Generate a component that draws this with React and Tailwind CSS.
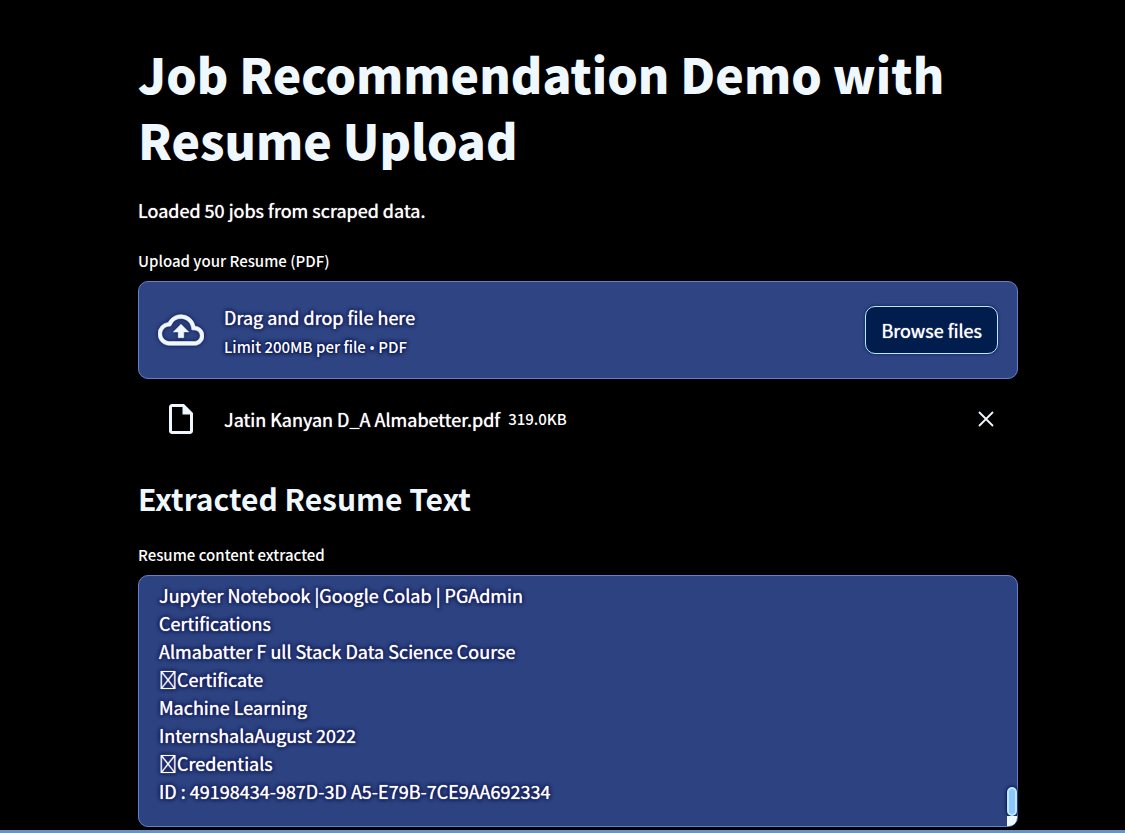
import { useEffect, useRef } from "react";

const resumeText = [
  "Jupyter Notebook |Google Colab | PGAdmin",
  "Certifications",
  "Almabatter F ull Stack Data Science Course",
  "\uf0b7Certificate",
  "Machine Learning",
  "InternshalaAugust 2022",
  "\uf0b7Credentials",
  "ID : 49198434-987D-3D A5-E79B-7CE9AA692334",
].join("\n");

function CloudUploadIcon() {
  return (
    <svg viewBox="0 0 24 24" className="h-[46px] w-[46px] shrink-0 fill-[#f0f8ff] stroke-[#f0f8ff] stroke-[0.3] drop-shadow-[0_0_2px_#0a1450]" aria-hidden="true">
      <path d="M19.35 10.04A7.49 7.49 0 0 0 12 4C9.11 4 6.6 5.64 5.35 8.04A5.994 5.994 0 0 0 0 14c0 3.31 2.69 6 6 6h13c2.76 0 5-2.24 5-5 0-2.64-2.05-4.78-4.65-4.96zM19 18H6c-2.21 0-4-1.79-4-4 0-2.05 1.53-3.76 3.56-3.97l1.07-.11.5-.95A5.469 5.469 0 0 1 12 6c2.62 0 4.88 1.86 5.39 4.43l.3 1.5 1.53.11A2.98 2.98 0 0 1 22 15c0 1.65-1.35 3-3 3zM8 13h2.55v3h2.9v-3H16l-4-4-4 4z" />
    </svg>
  );
}

function FileIcon() {
  return (
    <svg viewBox="0 0 24 24" className="h-9 w-9 shrink-0 fill-[#f0f8ff]" aria-hidden="true">
      <path d="M6 2c-1.1 0-1.99.9-1.99 2L4 20c0 1.1.89 2 1.99 2H18c1.1 0 2-.9 2-2V8l-6-6H6zm0 18V4h7v5h5v11H6z" />
    </svg>
  );
}

function Uploader() {
  return (
    <section>
      <label htmlFor="resume-file" className="block text-[15px] leading-6 font-medium">
        Upload your Resume (PDF)
      </label>
      <div className="mt-2 flex items-center rounded-[10px] border border-[#6480cc] bg-[#2f4482] px-[19px] py-4">
        <input id="resume-file" type="file" accept="application/pdf" className="sr-only" />
        <CloudUploadIcon />
        <div className="ml-5 flex-1 pt-1">
          <div className="text-[18px] leading-[30px] [text-shadow:0_0_1px_#fff,0_0_3px_#0a1450,0_0_4px_#0a1450,0_0_4px_#0a1450]">
            Drag and drop file here
          </div>
          <div className="text-[15px] leading-[30px] font-medium [text-shadow:0_0_3px_#0a1450,0_0_4px_#0a1450,0_0_4px_#0a1450]">
            Limit 200MB per file <span className="font-['Noto_Sans',sans-serif]">•</span> PDF
          </div>
        </div>
        <button
          type="button"
          className="h-12 rounded-[10px] border border-[#b5ecff] bg-[#011d4e] px-[15px] text-[18px] leading-7 shadow-[0_0_3px_#0a1450] [text-shadow:0_0_1px_#fff]"
        >
          Browse files
        </button>
      </div>
      <div className="flex items-center pt-[22px] pr-[22px] pb-5 pl-[25px]">
        <FileIcon />
        <div className="ml-[25px] flex flex-1 items-center gap-2">
          <span className="text-[18px] leading-7 [text-shadow:0_0_1px_#fff]">Jatin Kanyan D_A Almabetter.pdf</span>
          <span className="text-[15px] leading-7 font-medium">319.0KB</span>
        </div>
        <button type="button" aria-label="Remove file">
          <svg viewBox="0 0 20 20" className="h-5 w-5" fill="none" stroke="#f0f8ff" strokeWidth="1.8" aria-hidden="true">
            <path d="M3 3 17 17M17 3 3 17" />
          </svg>
        </button>
      </div>
    </section>
  );
}

function ExtractedText() {
  const area = useRef(null);
  useEffect(() => {
    area.current.scrollTop = area.current.scrollHeight;
  }, []);
  return (
    <section className="mt-5">
      <h2 className="text-[30px] leading-[42px] font-bold text-[#f0f8ff]">Extracted Resume Text</h2>
      <label htmlFor="resume-text" className="mt-6 block text-[15px] leading-6 font-medium">
        Resume content extracted
      </label>
      <div className="relative mt-2">
        <textarea
          id="resume-text"
          ref={area}
          defaultValue={resumeText}
          className="block h-[252px] w-full resize-none overflow-hidden rounded-[10px] border border-[#6480cc] bg-[#2d4280] px-5 py-[5px] text-[18px] leading-7 [text-shadow:0_0_1px_#fff,0_0_3px_#0a1450,0_0_4px_#0a1450,0_0_4px_#0a1450] outline-none"
        />
        <div className="absolute right-px bottom-[11px] h-[29px] w-[10px] rounded-full border-2 border-[#b5ecff] bg-[#90c4fc] shadow-[0_0_3px_1px_#0a1450]" />
        <div className="absolute right-px bottom-px h-[10px] w-[10px] rounded-br-lg bg-[#f0f8ff]" />
      </div>
    </section>
  );
}

export default function App() {
  return (
    <div className="flex min-h-screen flex-col border-b-[3px] border-[#6d91bf] bg-black font-['Noto_Sans_CJK_SC','Noto_Sans',sans-serif] text-white">
      <main className="w-full pt-10 pr-[107px] pb-[3px] pl-[138px]">
        <h1 className="text-[48px] leading-[66px] font-black text-[#f0f8ff]">Job Recommendation Demo with Resume Upload</h1>
        <p className="mt-6 mb-[25px] text-[18px] leading-7 [text-shadow:0_0_1px_#fff]">Loaded 50 jobs from scraped data.</p>
        <Uploader />
        <ExtractedText />
      </main>
    </div>
  );
}
